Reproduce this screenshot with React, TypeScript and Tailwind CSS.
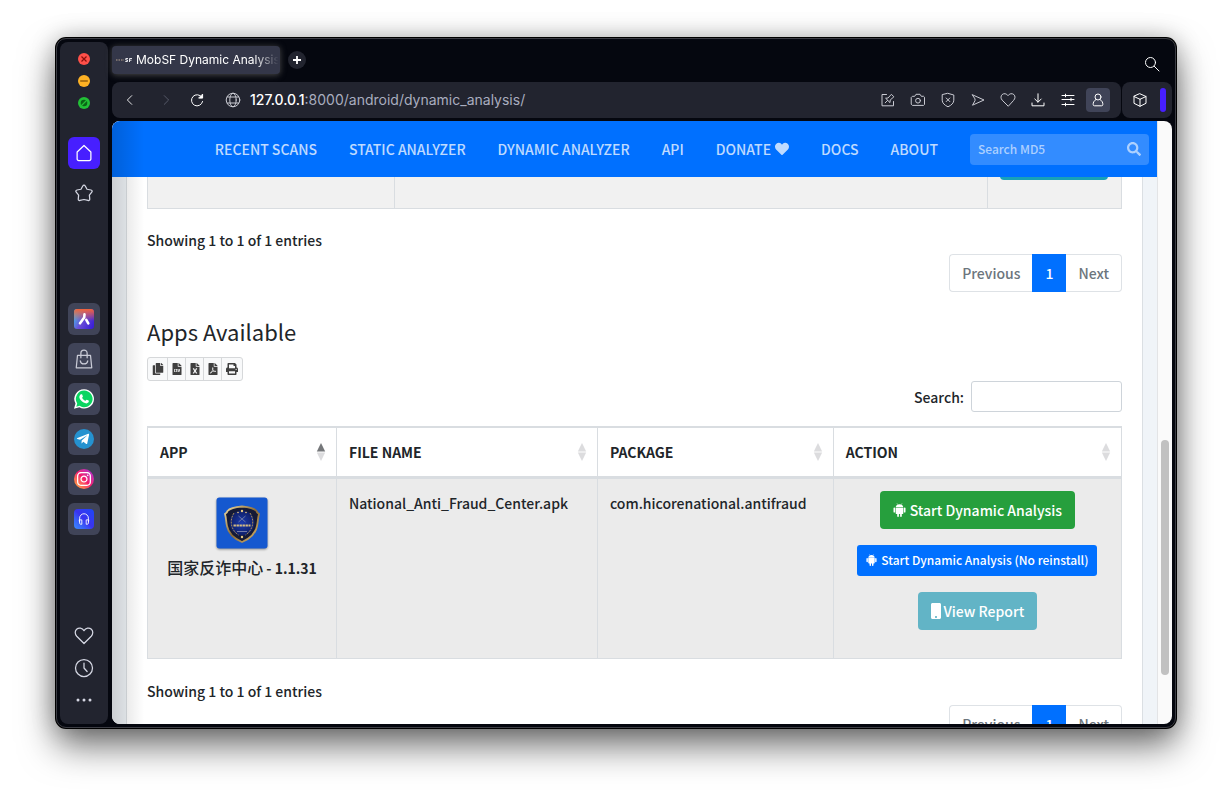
import type { ReactNode } from "react";
import {
  FaCopy,
  FaFileCsv,
  FaFileExcel,
  FaFilePdf,
  FaHeart,
  FaInstagram,
  FaMobile,
  FaPrint,
  FaSearch,
  FaTelegramPlane,
} from "react-icons/fa";

interface StrokeProps {
  children: ReactNode;
  className?: string;
}

function Stroke(props: StrokeProps) {
  return (
    <svg
      viewBox="0 0 16 16"
      fill="none"
      stroke="currentColor"
      strokeWidth="1"
      strokeLinecap="round"
      strokeLinejoin="round"
      className={props.className ?? "size-4"}
    >
      {props.children}
    </svg>
  );
}

const heartPath =
  "M8 14 L2.2 8.2 C.6 6.5.6 4 2.1 2.6 C3.8 1.1 6.6 1.4 8 3.7 C9.4 1.4 12.2 1.1 13.9 2.6 C15.4 4 15.4 6.5 13.8 8.2 Z";

const toolbarIcons = [
  {
    label: "Edit page",
    icon: (
      <Stroke>
        <path d="M6.5 2.5H2v11.3h11.500V9.500M5.200 10.800l2.500-2.500M6 6.200l2-.2 3.400-3.700 2.500 2.500-3.700 3.200-.2 2.200Z" />
      </Stroke>
    ),
  },
  {
    label: "Snapshot",
    icon: (
      <Stroke>
        <path d="M1.500 5.200 2.400 4.300H4.700L6 2.300h4l1.300 2h2.300l.9.900v7.300l-.9.900H2.400l-.9-.9Z" />
        <circle cx="8" cy="8.700" r="2.400" />
      </Stroke>
    ),
  },
  {
    label: "Blocker",
    icon: (
      <Stroke>
        <path d="M8 1.400 13.800 3V8.200c0 2.800-2.300 5-5.800 6.600C4.500 13.200 2.200 11 2.200 8.200V3ZM6.200 6l3.600 3.600M9.800 6 6.200 9.600" />
      </Stroke>
    ),
  },
  {
    label: "Send",
    icon: (
      <Stroke>
        <path d="M2.500 2.800 14 8 2.500 13.200 5 8.700V7.300Z" />
      </Stroke>
    ),
  },
  {
    label: "Add bookmark",
    icon: (
      <Stroke>
        <path d={heartPath} />
      </Stroke>
    ),
  },
  {
    label: "Downloads",
    icon: (
      <Stroke className="size-4 text-white">
        <path d="M8 1.800V10M4.800 7 8 10.200 11.200 7M2 11v2.800h12V11" />
      </Stroke>
    ),
  },
  {
    label: "Easy setup",
    icon: (
      <Stroke className="size-4 text-white">
        <path d="M2 3.500h12M2 7.500h12M2 12.500h12M5.500 2.200v2.600M11 6.200v2.600M5.500 11.200v2.600" />
      </Stroke>
    ),
  },
];

function HomeIcon() {
  return (
    <Stroke className="size-5">
      <path d="M2.500 7.200 8 2l5.500 5.200v5.600a1.200 1.200 0 0 1-1.200 1.200H3.700a1.200 1.200 0 0 1-1.200-1.200Z" />
    </Stroke>
  );
}

function StarIcon() {
  return (
    <Stroke className="size-5">
      <path d="M8 1.600c.5 0 .8.300 1 .800L10.400 5l3.200.6c1 .2 1.200 1 .6 1.700L12.300 9.700l.3 3.200c0 .9-.6 1.300-1.400 1L8 13.200l-3.200.7c-.8.300-1.400-.1-1.400-1l.3-3.200L1.800 7.300c-.6-.7-.4-1.500.6-1.700L5.600 5 7 2.400c.2-.5.5-.8 1-.8Z" />
    </Stroke>
  );
}

function AriaLogo() {
  return (
    <svg viewBox="0 0 20 20" className="size-5">
      <defs>
        <linearGradient id="aria" x1="0" y1="0.3" x2="1" y2="0.8">
          <stop offset="0" stopColor="#45b7e8" />
          <stop offset="0.45" stopColor="#6a4bd6" />
          <stop offset="1" stopColor="#3a1fd8" />
        </linearGradient>
        <linearGradient id="ariaTop" x1="0.5" y1="0" x2="0.5" y2="1">
          <stop offset="0" stopColor="#f4623a" />
          <stop offset="0.6" stopColor="#f4623a" stopOpacity="0" />
        </linearGradient>
      </defs>
      <rect width="20" height="20" rx="3" fill="url(#aria)" />
      <rect width="20" height="20" rx="3" fill="url(#ariaTop)" />
      <path
        d="M10.500 5.300 10.200 8.600 6 14.300M12.300 10.800 14.300 14.300"
        fill="none"
        stroke="#fff"
        strokeWidth="2.600"
        strokeLinecap="round"
        strokeLinejoin="round"
      />
    </svg>
  );
}

function BagIcon() {
  return (
    <Stroke className="size-5 text-[#c9cbd6]">
      <path d="M2.800 5h10.400l1 10H1.800ZM5.500 7V3.300a2.500 2.500 0 0 1 5 0V7M5 9.500c.5 3.300 5.500 3.300 6 0" />
    </Stroke>
  );
}

function WhatsappLogo() {
  return (
    <svg viewBox="0 0 20 20" className="size-5">
      <path d="M10.200.2a9.700 9.700 0 1 1-4.800 18.100L0 19.800l1.500-5.200A9.700 9.700 0 0 1 10.200.2Z" fill="#fff" />
      <path d="M10.200 1.600a8.300 8.300 0 1 1-4.500 15.200L2.300 17.700l.9-3.300A8.300 8.300 0 0 1 10.200 1.600Z" fill="#0bd561" />
      <path
        d="M7 5.300c.4-.2 1-.1 1.200.3l.7 1.800c.1.400-.7 1.100-.8 1.400.7 1.400 1.700 2.300 3.200 3 .4-.1 1-1.200 1.400-1.100l1.900.9c.5.300.2 1.500-.3 2-1.200 1.200-2.900.9-4.700 0-2.100-1.100-3.800-3.200-4.200-4.800-.3-1.400.5-3 1.600-3.500Z"
        fill="#fff"
      />
    </svg>
  );
}

function TelegramLogo() {
  return (
    <span className="grid size-5 place-items-center rounded-full bg-[#2592d0] text-white">
      <FaTelegramPlane className="mr-[2px] size-[14px]" />
    </span>
  );
}

function InstagramLogo() {
  return (
    <span className="grid size-5 place-items-center rounded-full bg-linear-to-bl from-[#a512e0] via-[#f5156b] to-[#ffb000] text-white">
      <FaInstagram className="size-4" />
    </span>
  );
}

function PlayerLogo() {
  return (
    <span className="grid size-5 place-items-center rounded-sm bg-linear-to-tr from-[#3d8bff] via-[#3a33f0] to-[#1747f5] text-white">
      <Stroke className="size-[14px]">
        <path d="M3 11.500V7a5 5 0 0 1 10 0v4.500M3 9h2.500v5H4.200A1.200 1.200 0 0 1 3 12.800ZM13 9h-2.500v5h1.300a1.200 1.200 0 0 0 1.200-1.200Z" />
      </Stroke>
    </span>
  );
}

const panelApps = [
  { label: "Aria", icon: <AriaLogo /> },
  { label: "Shopping", icon: <BagIcon /> },
  { label: "WhatsApp", icon: <WhatsappLogo /> },
  { label: "Telegram", icon: <TelegramLogo /> },
  { label: "Instagram", icon: <InstagramLogo /> },
  { label: "Player", icon: <PlayerLogo /> },
];

function WindowButtons() {
  return (
    <div className="flex flex-col gap-[10px] pt-[11px]">
      <button type="button" aria-label="Close" className="block size-3">
        <svg viewBox="0 0 12 12" className="size-3">
          <circle cx="6" cy="6" r="6" fill="#ff5049" />
          <path d="m3.500 3.500 5 5m0-5-5 5" stroke="#8a0f0c" strokeWidth="1.200" />
        </svg>
      </button>
      <button type="button" aria-label="Minimize" className="block size-3">
        <svg viewBox="0 0 12 12" className="size-3">
          <circle cx="6" cy="6" r="6" fill="#fdb124" />
          <path d="M2.200 6h7.600" stroke="#96600b" strokeWidth="1.500" />
        </svg>
      </button>
      <button type="button" aria-label="Full screen" className="block size-3">
        <svg viewBox="0 0 12 12" className="size-3">
          <circle cx="6" cy="6" r="6" fill="#22c036" />
          <circle cx="6" cy="6" r="3.300" fill="#0b6416" />
          <path d="m3 9 6-6" stroke="#22c036" strokeWidth="1.200" />
        </svg>
      </button>
    </div>
  );
}

function Sidebar() {
  return (
    <aside className="flex w-12 shrink-0 flex-col items-center rounded-lg bg-[#22242f] text-[#d5d7e3]">
      <WindowButtons />
      <div className="mt-7 flex flex-col gap-2">
        <button
          type="button"
          aria-label="Home"
          className="grid size-8 place-items-center rounded-md bg-[#471fff] text-white"
        >
          <HomeIcon />
        </button>
        <button type="button" aria-label="Pinboards" className="grid size-8 place-items-center">
          <StarIcon />
        </button>
      </div>
      <div className="mt-[94px] flex flex-col gap-2">
        {panelApps.map((app) => (
          <button
            key={app.label}
            type="button"
            aria-label={app.label}
            className="grid size-8 place-items-center rounded-md bg-[#404458]"
          >
            {app.icon}
          </button>
        ))}
      </div>
      <div className="mt-auto flex flex-col pb-2">
        <button type="button" aria-label="Bookmarks" className="grid size-8 place-items-center">
          <Stroke className="size-5">
            <path d={heartPath} />
          </Stroke>
        </button>
        <button type="button" aria-label="History" className="grid size-8 place-items-center">
          <Stroke className="size-5">
            <circle cx="8" cy="8" r="6.800" />
            <path d="M8 4v4l2.500 2.800" />
          </Stroke>
        </button>
        <button type="button" aria-label="More" className="grid size-8 place-items-center">
          <svg viewBox="0 0 16 16" fill="currentColor" className="size-4">
            <circle cx="2" cy="8" r="1.500" />
            <circle cx="8" cy="8" r="1.500" />
            <circle cx="14" cy="8" r="1.500" />
          </svg>
        </button>
      </div>
    </aside>
  );
}

function TabBar() {
  return (
    <div className="flex h-10 items-start pt-1 pr-3">
      <div className="flex h-7 w-[168px] items-center gap-1 rounded bg-[#343749] pl-1 shadow-[0_1px_6px_#4a4a4a]">
        <svg viewBox="0 0 16 16" className="size-4 shrink-0">
          <path d="M0 8h8" stroke="#8c8078" strokeWidth="1.500" strokeDasharray="1.500 1" />
          <path
            d="M12 6.500H9.800V8h1.700v1.500H9.300M13.500 10V6.500H16M13.500 8.200h2"
            fill="none"
            stroke="#e5e5ea"
          />
        </svg>
        <span className="flex-1 overflow-hidden text-xs whitespace-nowrap text-white [mask-image:linear-gradient(to_right,black_82%,transparent_99%)]">
          MobSF Dynamic Analysis
        </span>
      </div>
      <button
        type="button"
        aria-label="New tab"
        className="mt-[5px] ml-2 grid size-[18px] place-items-center rounded-full bg-[#22242f] text-white"
      >
        <svg viewBox="0 0 10 10" className="size-[10px]">
          <path d="M5 1v8M1 5h8" stroke="currentColor" strokeWidth="1.800" />
        </svg>
      </button>
      <button type="button" aria-label="Search tabs" className="mt-[10px] ml-auto text-white">
        <Stroke>
          <circle cx="6.500" cy="6.500" r="5" />
          <path d="m10.300 10.300 4.700 4.700" />
        </Stroke>
      </button>
    </div>
  );
}

function Toolbar() {
  return (
    <div className="flex h-9 gap-px text-[#c9cad2]">
      <div className="flex flex-1 items-center rounded-lg bg-[#22242f] px-[11px]">
        <div className="flex gap-[18px]">
          <button type="button" aria-label="Back" className="text-white">
            <Stroke className="size-[14px]">
              <path d="m10 3-5 5 5 5" />
            </Stroke>
          </button>
          <button type="button" aria-label="Forward" className="ml-1 text-[#5d6070]">
            <Stroke className="size-[14px]">
              <path d="m6 3 5 5-5 5" />
            </Stroke>
          </button>
          <button type="button" aria-label="Reload" className="ml-[-2px] text-white">
            <Stroke>
              <path d="M12.800 5.200A5.600 5.600 0 1 0 13.600 9.500" />
              <path d="M13.600 2.500v3.600H10Z" fill="currentColor" />
            </Stroke>
          </button>
        </div>
        <Stroke className="ml-5 size-4">
          <circle cx="8" cy="8" r="6.800" />
          <ellipse cx="8" cy="8" rx="3.200" ry="6.800" />
          <path d="M2.300 5h11.400M2.300 11h11.400" />
        </Stroke>
        <label className="ml-[9px] flex min-w-0 flex-1 items-center text-sm">
          <span className="font-medium text-white">127.0.0.1</span>
          <input
            type="text"
            aria-label="Address"
            defaultValue=":8000/android/dynamic_analysis/"
            className="min-w-0 flex-1 bg-transparent text-[#a9adbf] outline-none"
          />
        </label>
        <div className="flex items-center gap-[14px]">
          {toolbarIcons.map((item) => (
            <button key={item.label} type="button" aria-label={item.label}>
              {item.icon}
            </button>
          ))}
          <button
            type="button"
            aria-label="Profile"
            className="ml-[-4px] grid size-6 place-items-center rounded bg-[#404458] text-white"
          >
            <Stroke>
              <circle cx="8" cy="5" r="3" />
              <path d="M6 7.500c-2.200 1.300-3 3.200-2.800 5.200.1.800.5 1.100 1.300 1.100h7c.8 0 1.200-.3 1.300-1.100.2-2-.6-3.900-2.800-5.200" />
            </Stroke>
          </button>
        </div>
      </div>
      <div className="flex w-[50px] items-center rounded-lg bg-[#22242f] pl-[10px]">
        <button type="button" aria-label="Extensions" className="text-white">
          <Stroke>
            <path d="M8 1.800 14 4.500v6.800l-6 3-6-3V4.500ZM2 4.500l6 2.800 6-2.800M8 7.300v7" />
          </Stroke>
        </button>
        <span className="ml-3 h-6 w-[6px] rounded-full bg-[#471fff]" />
      </div>
    </div>
  );
}

function Navbar() {
  return (
    <nav className="flex h-14 shrink-0 items-center justify-end gap-8 bg-[#0070ff] pr-2 text-white/75">
      <a href="#recent">RECENT SCANS</a>
      <a href="#static">STATIC ANALYZER</a>
      <a href="#dynamic">DYNAMIC ANALYZER</a>
      <a href="#api">API</a>
      <a href="#donate" className="flex items-center gap-1">
        DONATE <FaHeart className="size-[14px]" />
      </a>
      <a href="#docs">DOCS</a>
      <a href="#about">ABOUT</a>
      <form className="flex h-[31px] w-[179px] items-center rounded bg-white/20 px-2">
        <input
          type="search"
          aria-label="Search MD5"
          placeholder="Search MD5"
          className="min-w-0 flex-1 bg-transparent text-[12px] outline-none placeholder:text-white/60"
        />
        <button type="button" aria-label="Search" className="text-white/60">
          <FaSearch className="size-[14px]" />
        </button>
      </form>
    </nav>
  );
}

function Pagination() {
  return (
    <div className="flex justify-end leading-[22px] text-[#6c757d]">
      <button type="button" className="h-[38px] rounded-l border border-r-0 border-[#dee2e6] px-3">
        Previous
      </button>
      <button type="button" className="h-[38px] bg-[#0070ff] px-[13px] text-white">
        1
      </button>
      <button type="button" className="h-[38px] rounded-r border border-l-0 border-[#dee2e6] px-3">
        Next
      </button>
    </div>
  );
}

function SortIcon(props: { ascending?: boolean }) {
  return (
    <svg viewBox="0 0 10 18" className="size-[18px]">
      <path d="M5 0 9.200 8.500H.8Z" fill={props.ascending ? "#75777a" : "#dcdcde"} />
      <path d="M5 18 9.200 9.500H.8Z" fill="#dcdcde" />
    </svg>
  );
}

function AndroidIcon(props: { className: string }) {
  return (
    <svg viewBox="0 0 13 14" fill="currentColor" className={props.className}>
      <path d="M4 .4 4.800 1.600M9 .4 8.200 1.600" stroke="currentColor" strokeWidth=".6" />
      <path d="M2.700 4.300C2.900 2.300 4.500 1.200 6.500 1.200s3.600 1.100 3.800 3.100Z" />
      <path d="M2.700 4.700h7.600v5.500a.9.900 0 0 1-.9.900h-.6v2a.85.850 0 0 1-1.700 0v-2H5.900v2a.85.850 0 0 1-1.700 0v-2h-.6a.9.900 0 0 1-.9-.9Z" />
      <rect x=".5" y="4.600" width="1.700" height="5" rx=".85" />
      <rect x="10.800" y="4.600" width="1.700" height="5" rx=".85" />
    </svg>
  );
}

function AppIcon() {
  return (
    <svg viewBox="0 0 52 52" className="size-[52px] drop-shadow-[0_1px_1px_rgba(0,0,0,0.4)]">
      <defs>
        <linearGradient id="gold" x1="0" y1="0" x2="1" y2="1">
          <stop offset="0" stopColor="#f0dca0" />
          <stop offset="0.5" stopColor="#8a6a35" />
          <stop offset="1" stopColor="#dcb970" />
        </linearGradient>
        <radialGradient id="field">
          <stop offset="0" stopColor="#1a3bb0" />
          <stop offset="1" stopColor="#101f66" />
        </radialGradient>
      </defs>
      <rect x=".5" y=".5" width="51" height="51" rx="3" fill="#1558cf" />
      <path
        d="M26 9.500c4 .3 12 1.500 14.500 4.500.3 1.500 1.500 2.500 2.500 3-1.200 4-1 8-2 12-1.500 8-8 13-15 16-7-3-13.500-8-15-16-1-4-.8-8-2-12 1-.5 2.200-1.500 2.500-3C14 11 22 9.800 26 9.500Z"
        fill="#151a35"
        stroke="url(#gold)"
        strokeWidth="1.800"
      />
      <circle cx="26" cy="26" r="12.500" fill="url(#field)" />
      <path
        d="M18 16c-5 8-3 17 4.500 22M34 16c5 8 3 17-4.500 22"
        fill="none"
        stroke="#a98e58"
        strokeDasharray="2 1"
      />
      <path d="m22.500 19 7 6m0-6-7 6" stroke="#7f86a8" strokeWidth="0.800" />
      <path d="M17.500 28.500h17" stroke="#d5bb80" strokeWidth="2" strokeDasharray="2.400 .6" />
      <path d="M21 34.500h10" stroke="#8b91b5" strokeWidth=".8" />
      <circle cx="26" cy="14" r="1.200" fill="#e8ca80" />
      <circle cx="22" cy="15.500" r=".8" fill="#e8ca80" />
      <circle cx="30" cy="15.500" r=".8" fill="#e8ca80" />
      <circle cx="26" cy="40" r="1.200" fill="#e8ca80" />
    </svg>
  );
}

const exports = [
  { label: "Copy", width: "w-5", icon: <FaCopy /> },
  { label: "CSV", width: "w-[18px]", icon: <FaFileCsv /> },
  { label: "Excel", width: "w-[18px]", icon: <FaFileExcel /> },
  { label: "PDF", width: "w-[18px]", icon: <FaFilePdf /> },
  { label: "Print", width: "w-5", icon: <FaPrint /> },
];

const columns = [
  { name: "APP", width: "w-[19.4%]" },
  { name: "FILE NAME", width: "w-[26.8%]" },
  { name: "PACKAGE", width: "w-[24.2%]" },
  { name: "ACTION", width: "w-[29.6%]" },
];

function RunningAppsTable() {
  return (
    <table className="-mt-10 w-full table-fixed border-collapse bg-[#f1f1f1]">
      <tbody>
        <tr className="h-[71px]">
          <td className="w-[25.4%] border border-[#d9dde1]" />
          <td className="border border-[#d9dde1]" />
          <td className="w-[13.8%] border border-[#d9dde1] text-center align-top">
            <button
              type="button"
              aria-label="Take action"
              className="mt-1 h-[38px] w-[108px] rounded bg-[#17a2b8]"
            />
          </td>
        </tr>
      </tbody>
    </table>
  );
}

function AppsTable() {
  return (
    <table className="mt-[14px] w-full table-fixed border-collapse">
      <thead>
        <tr className="h-[50px] border-t-2 border-b-[3px] border-[#d9dde1]">
          {columns.map((column, i) => (
            <th
              key={column.name}
              className={`${column.width} border-x border-[#d9dde1] pr-[6px] pl-3 text-left font-bold`}
            >
              <div className="flex items-center justify-between">
                {column.name}
                <SortIcon ascending={i === 0} />
              </div>
            </th>
          ))}
        </tr>
      </thead>
      <tbody>
        <tr className="h-[181px] bg-[#ebebeb] align-top">
          <td className="border border-[#d9dde1] pt-[18px]">
            <div className="flex flex-col items-center gap-2 font-bold">
              <AppIcon />
              <p>
                <span className="text-[16px] font-medium">国家反诈中心</span> - 1.1.31
              </p>
            </div>
          </td>
          <td className="border border-[#d9dde1] px-3 pt-[14px]">National_Anti_Fraud_Center.apk</td>
          <td className="border border-[#d9dde1] px-3 pt-[14px]">com.hicorenational.antifraud</td>
          <td className="border border-[#d9dde1] pt-3">
            <div className="flex flex-col items-center gap-4 text-white">
              <button
                type="button"
                className="flex h-[38px] items-center gap-1 rounded bg-[#269f3d] px-[13px]"
              >
                <AndroidIcon className="h-[14px] w-[13px]" /> Start Dynamic Analysis
              </button>
              <button
                type="button"
                className="flex h-[31px] items-center gap-1 rounded-[3px] bg-[#0070ff] px-[9px] text-[12px]"
              >
                <AndroidIcon className="h-3 w-[11px]" /> Start Dynamic Analysis (No reinstall)
              </button>
              <button
                type="button"
                className="flex h-[38px] items-center gap-[3px] rounded bg-[#62b4c6] px-[13px]"
              >
                <FaMobile className="h-4 w-[10px]" /> View Report
              </button>
            </div>
          </td>
        </tr>
      </tbody>
    </table>
  );
}

function DynamicAnalysisPage() {
  return (
    <div className="relative flex min-h-0 flex-1 overflow-hidden rounded-lg bg-[#fafafa] font-['Noto_Sans_CJK_SC',sans-serif] text-[14px] leading-5 font-medium text-[#212529]">
      <div className="flex min-w-0 flex-1 flex-col border-r border-[#e3e4e6] bg-[#f0f4f8]">
        <Navbar />
        <main className="mx-[14px] min-h-0 flex-1 overflow-hidden border-x border-[#dbdfe3] bg-white px-5">
          <RunningAppsTable />
          <p className="mt-[21px] mb-1">Showing 1 to 1 of 1 entries</p>
          <Pagination />
          <h2 className="mt-[25px] text-[22px] leading-7 font-normal">Apps Available</h2>
          <div className="mt-3 flex w-fit divide-x divide-[#d6d8da] rounded-[3px] border border-[#d6d8da] bg-[#f8f9fa] text-[12px] text-[#3f3f3f]">
            {exports.map((item) => (
              <button
                key={item.label}
                type="button"
                aria-label={item.label}
                className={`${item.width} flex h-[22px] items-center justify-center`}
              >
                {item.icon}
              </button>
            ))}
          </div>
          <div className="flex justify-end">
            <label className="flex items-center gap-[7px]">
              Search:
              <input
                type="search"
                className="h-[31px] w-[151px] rounded-[3px] border border-[#ced4da] bg-white px-2 outline-none"
              />
            </label>
          </div>
          <AppsTable />
          <p className="mt-[22px] mb-1">Showing 1 to 1 of 1 entries</p>
          <Pagination />
        </main>
      </div>
      <div className="flex w-[14px] flex-col items-center">
        <div className="mt-[319px] h-[235px] w-2 rounded-full bg-[#c1c1c1]" />
      </div>
      <div className="pointer-events-none absolute inset-y-0 left-0 w-8 bg-linear-to-r from-black/15 to-transparent" />
    </div>
  );
}

export default function App() {
  return (
    <div className="flex h-screen min-h-[600px] flex-col bg-white px-14 pt-[38px] pb-[74px] font-[Inter,sans-serif]">
      <div className="flex min-h-0 flex-1 gap-1 rounded-[10px] border border-[#3c3d44] bg-[#05070f] p-[3px] shadow-[0_0_0_1px_#000,0_18px_36px_rgba(0,0,0,0.55),0_0_24px_rgba(0,0,0,0.25)]">
        <Sidebar />
        <div className="flex min-w-0 flex-1 flex-col">
          <TabBar />
          <Toolbar />
          <div className="mt-[3px] flex min-h-0 flex-1 flex-col">
            <DynamicAnalysisPage />
          </div>
        </div>
      </div>
    </div>
  );
}
